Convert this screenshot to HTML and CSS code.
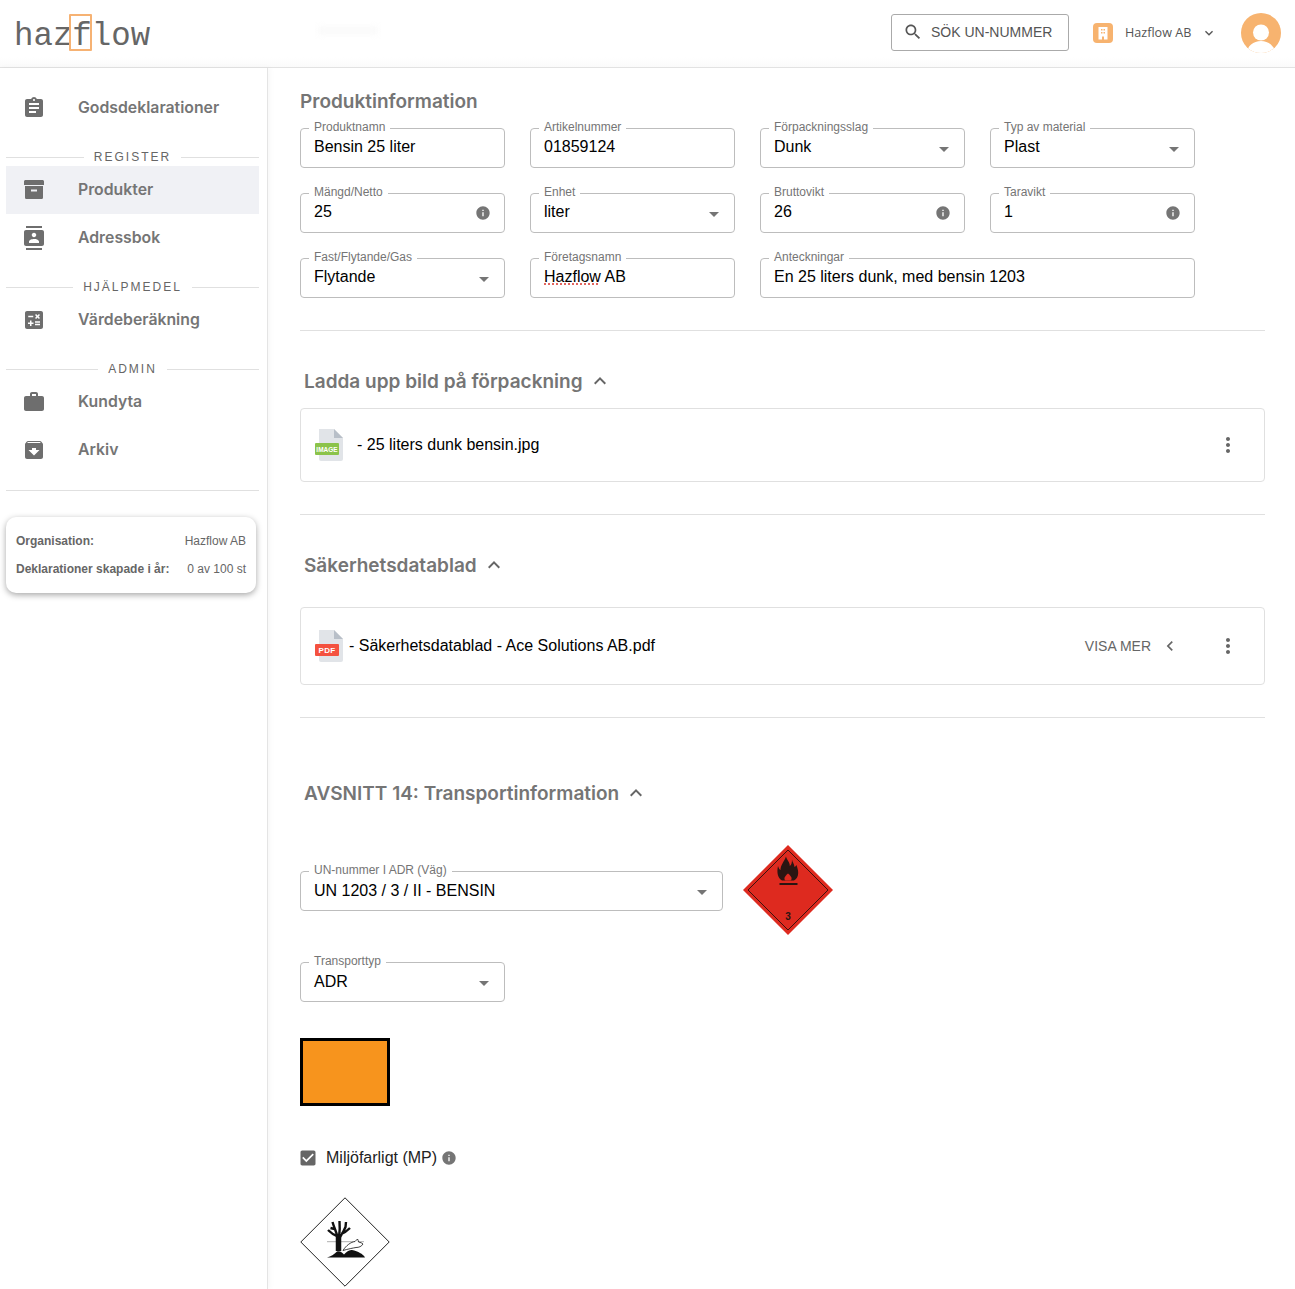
FILE: index.html
```html
<!DOCTYPE html>
<html lang="sv">
<head>
<meta charset="utf-8">
<title>Hazflow – Produktinformation</title>
<link rel="stylesheet" href="styles.css">
</head>
<body>
<svg class="sprite" aria-hidden="true">
  <symbol id="i-assign" viewBox="0 0 24 24"><path d="M19 3h-4.18C14.4 1.84 13.3 1 12 1c-1.3 0-2.4.84-2.82 2H5c-1.1 0-2 .9-2 2v14c0 1.1.9 2 2 2h14c1.1 0 2-.9 2-2V5c0-1.1-.9-2-2-2zm-7 0c.55 0 1 .45 1 1s-.45 1-1 1-1-.45-1-1 .45-1 1-1zm2 14H7v-2h7v2zm3-4H7v-2h10v2zm0-4H7V7h10v2z"/></symbol>
  <symbol id="i-box" viewBox="0 0 24 24"><path fill-rule="evenodd" d="M2 3.500C2 2.700 2.700 2 3.500 2h17c.8 0 1.500.7 1.500 1.500V7H2zM3 8h18v11.500c0 1-.8 1.500-1.500 1.500h-15C3.800 21 3 20.500 3 19.500zm6 3.500V13.500h6v-2z"/></symbol>
  <symbol id="i-contacts" viewBox="0 0 24 24"><path d="M20 0H4v2h16V0zM4 24h16v-2H4v2zM20 4H4c-1.100 0-2 .9-2 2v12c0 1.100.9 2 2 2h16c1.100 0 2-.9 2-2V6c0-1.100-.9-2-2-2zm-8 2.750c1.240 0 2.250 1.010 2.250 2.250s-1.010 2.250-2.250 2.250S9.750 10.240 9.750 9 10.760 6.750 12 6.750zM17 17H7v-1.500c0-1.670 3.330-2.500 5-2.500s5 .83 5 2.500V17z"/></symbol>
  <symbol id="i-calc" viewBox="0 0 24 24"><path d="M19 3H5c-1.100 0-2 .9-2 2v14c0 1.100.9 2 2 2h14c1.100 0 2-.9 2-2V5c0-1.100-.9-2-2-2zm-5.970 4.060L14.090 6l1.410 1.410L16.910 6l1.060 1.060-1.410 1.410 1.410 1.410-1.060 1.060-1.410-1.400-1.410 1.410-1.060-1.060 1.410-1.410-1.410-1.420zm-6.780.66h5v1.500h-5v-1.500zM11.500 16h-2v2H8v-2H6v-1.500h2v-2h1.500v2h2V16zm6.500 1.250h-5v-1.500h5v1.500zm0-2.500h-5v-1.500h5v1.500z"/></symbol>
  <symbol id="i-work" viewBox="0 0 24 24"><path d="M20 6h-4V4c0-1.110-.89-2-2-2h-4c-1.110 0-2 .89-2 2v2H4c-1.110 0-1.990.89-1.990 2L2 19c0 1.110.89 2 2 2h16c1.110 0 2-.89 2-2V8c0-1.110-.89-2-2-2zm-6 0h-4V4h4v2z"/></symbol>
  <symbol id="i-archive" viewBox="0 0 24 24"><path d="M20.540 5.230l-1.390-1.680C18.880 3.210 18.470 3 18 3H6c-.47 0-.88.21-1.160.55L3.460 5.230C3.170 5.570 3 6.020 3 6.500V19c0 1.100.9 2 2 2h14c1.100 0 2-.9 2-2V6.500c0-.48-.17-.93-.46-1.270zM12 17.500L6.500 12H10v-2h4v2h3.500L12 17.500zM5.120 5l.81-1h12l.94 1H5.120z"/></symbol>
  <symbol id="i-search" viewBox="0 0 24 24"><path d="M15.500 14h-.79l-.28-.27C15.410 12.590 16 11.110 16 9.500 16 5.910 13.090 3 9.500 3S3 5.910 3 9.500 5.910 16 9.500 16c1.610 0 3.090-.59 4.230-1.570l.27.28v.79l5 4.990L20.490 19l-4.990-5zm-6 0C7.010 14 5 11.990 5 9.500S7.010 5 9.500 5 14 7.010 14 9.500 11.990 14 9.500 14z"/></symbol>
  <symbol id="i-info" viewBox="0 0 24 24"><path d="M12 2C6.480 2 2 6.480 2 12s4.480 10 10 10 10-4.480 10-10S17.520 2 12 2zm1 15h-2v-6h2v6zm0-8h-2V7h2v2z"/></symbol>
  <symbol id="i-more" viewBox="0 0 24 24"><path d="M12 8c1.100 0 2-.9 2-2s-.9-2-2-2-2 .9-2 2 .9 2 2 2zm0 2c-1.100 0-2 .9-2 2s.9 2 2 2 2-.9 2-2-.9-2-2-2zm0 6c-1.100 0-2 .9-2 2s.9 2 2 2 2-.9 2-2-.9-2-2-2z"/></symbol>
  <symbol id="i-up" viewBox="0 0 24 24"><path d="M12 8l-6 6 1.410 1.410L12 10.830l4.590 4.580L18 14z"/></symbol>
  <symbol id="i-down" viewBox="0 0 24 24"><path d="M16.590 8.590L12 13.170 7.410 8.590 6 10l6 6 6-6z"/></symbol>
  <symbol id="i-left" viewBox="0 0 24 24"><path d="M15.410 7.410L14 6l-6 6 6 6 1.410-1.410L10.830 12z"/></symbol>
  <symbol id="i-drop" viewBox="0 0 24 24"><path d="M7 10l5 5 5-5z"/></symbol>
  <symbol id="i-check" viewBox="0 0 24 24"><path d="M19 3H5c-1.110 0-2 .9-2 2v14c0 1.100.89 2 2 2h14c1.110 0 2-.9 2-2V5c0-1.100-.89-2-2-2zm-9 14l-5-5 1.410-1.410L10 14.170l7.590-7.590L19 8l-9 9z"/></symbol>
</svg>

<header class="topbar">
  <div class="logo">haz<span class="logo-f">f</span>low</div>
  <div class="ghost" aria-hidden="true"></div>
  <button class="search-btn" type="button"><svg class="icon-20"><use href="#i-search"/></svg><span>SÖK UN-NUMMER</span></button>
  <div class="org">
    <svg class="org-icon" viewBox="0 0 20 20"><rect width="20" height="20" rx="4" fill="#f7b36f"/><path fill="#fff" d="M5.500 4h9v12.500H11v-3H9v3H5.500z"/><path fill="#f7b36f" d="M8 6h1.500v1.500H8zM10.500 6H12v1.500h-1.500zM8 9h1.500v1.500H8zM10.500 9H12v1.500h-1.500z"/></svg>
    <span class="org-name">Hazflow AB</span>
    <svg class="icon-16"><use href="#i-down"/></svg>
  </div>
  <svg class="avatar" viewBox="0 0 40 40"><defs><clipPath id="av"><circle cx="20" cy="20" r="20"/></clipPath></defs><g clip-path="url(#av)"><rect width="40" height="40" fill="#f7b36f"/><circle cx="20" cy="19.500" r="8" fill="#fff"/><ellipse cx="20" cy="40" rx="14" ry="12" fill="#fff"/></g></svg>
</header>

<div class="shell">
  <aside class="sidebar">
    <nav>
      <a class="nav-item"><svg class="icon-24"><use href="#i-assign"/></svg>Godsdeklarationer</a>
      <div class="nav-label"><span>REGISTER</span></div>
      <a class="nav-item active"><svg class="icon-24"><use href="#i-box"/></svg>Produkter</a>
      <a class="nav-item"><svg class="icon-24"><use href="#i-contacts"/></svg>Adressbok</a>
      <div class="nav-label"><span>HJÄLPMEDEL</span></div>
      <a class="nav-item"><svg class="icon-24"><use href="#i-calc"/></svg>Värdeberäkning</a>
      <div class="nav-label"><span>ADMIN</span></div>
      <a class="nav-item"><svg class="icon-24"><use href="#i-work"/></svg>Kundyta</a>
      <a class="nav-item"><svg class="icon-24"><use href="#i-archive"/></svg>Arkiv</a>
    </nav>
    <hr class="side-rule">
    <div class="org-card">
      <div class="org-row"><strong>Organisation:</strong><span>Hazflow AB</span></div>
      <div class="org-row"><strong>Deklarationer skapade i år:</strong><span>0 av 100 st</span></div>
    </div>
  </aside>

  <main class="content">
    <h2 class="page-title">Produktinformation</h2>
    <div class="form-grid">
      <div class="field"><label>Produktnamn</label><span class="value">Bensin 25 liter</span></div>
      <div class="field"><label>Artikelnummer</label><span class="value">01859124</span></div>
      <div class="field"><label>Förpackningsslag</label><span class="value">Dunk</span><svg class="drop"><use href="#i-drop"/></svg></div>
      <div class="field"><label>Typ av material</label><span class="value">Plast</span><svg class="drop"><use href="#i-drop"/></svg></div>
      <div class="field"><label>Mängd/Netto</label><span class="value">25</span><svg class="info"><use href="#i-info"/></svg></div>
      <div class="field"><label>Enhet</label><span class="value">liter</span><svg class="drop"><use href="#i-drop"/></svg></div>
      <div class="field"><label>Bruttovikt</label><span class="value">26</span><svg class="info"><use href="#i-info"/></svg></div>
      <div class="field"><label>Taravikt</label><span class="value">1</span><svg class="info"><use href="#i-info"/></svg></div>
      <div class="field"><label>Fast/Flytande/Gas</label><span class="value">Flytande</span><svg class="drop"><use href="#i-drop"/></svg></div>
      <div class="field"><label>Företagsnamn</label><span class="value"><span class="spell">Hazflow</span> AB</span></div>
      <div class="field span-2"><label>Anteckningar</label><span class="value">En 25 liters dunk, med bensin 1203</span></div>
    </div>
    <hr class="rule">

    <h3 class="section-head">Ladda upp bild på förpackning<svg class="icon-24"><use href="#i-up"/></svg></h3>
    <div class="file-card image-card">
      <svg class="file-icon" viewBox="0 0 30 34"><path fill="#e1e4e8" d="M4 1h15l9 9v21a2 2 0 0 1-2 2H6a2 2 0 0 1-2-2z"/><path fill="#b8bfc8" d="M19 1l9 9h-9z"/><rect y="15" width="24" height="12" rx="1" fill="#8bc34a"/><text x="12" y="23.500" class="file-tag small">IMAGE</text></svg>
      <span class="file-name">- 25 liters dunk bensin.jpg</span>
      <svg class="icon-24 more"><use href="#i-more"/></svg>
    </div>
    <hr class="rule">

    <h3 class="section-head">Säkerhetsdatablad<svg class="icon-24"><use href="#i-up"/></svg></h3>
    <div class="file-card pdf-card">
      <svg class="file-icon" viewBox="0 0 30 34"><path fill="#e1e4e8" d="M4 1h15l9 9v21a2 2 0 0 1-2 2H6a2 2 0 0 1-2-2z"/><path fill="#b8bfc8" d="M19 1l9 9h-9z"/><rect y="15" width="24" height="12" rx="1" fill="#f4513f"/><text x="12" y="24" class="file-tag">PDF</text></svg>
      <span class="file-name">- Säkerhetsdatablad - Ace Solutions AB.pdf</span>
      <span class="visa-mer">VISA MER</span>
      <svg class="icon-20 visa-chev"><use href="#i-left"/></svg>
      <svg class="icon-24 more"><use href="#i-more"/></svg>
    </div>
    <hr class="rule">

    <h3 class="section-head transport-head">AVSNITT 14: Transportinformation<svg class="icon-24"><use href="#i-up"/></svg></h3>
    <div class="un-row">
      <div class="field un-field"><label>UN-nummer I ADR (Väg)</label><span class="value">UN 1203 / 3 / II - BENSIN</span><svg class="drop"><use href="#i-drop"/></svg></div>
      <svg class="placard" viewBox="0 0 90 90">
        <polygon points="45,0 90,45 45,90 0,45" fill="#de2a1f"/>
        <polygon points="45,5 85,45 45,85 5,45" fill="none" stroke="#3a120e" stroke-width="1"/>
        <path fill="#2b1512" d="M39 35.500C35 33 33.500 28 35 21c.8 2.500 1.500 3.500 2.500 4C37.500 20 41 17 43 11.500c1 4 4 5.500 3.800 9.500 1.500-1 2.200-3 2.200-6.500 .5 3 2.200 4 2.500 7.500 .8-.5 1.500-1 2-2 1 3 1.800 5.500 1.700 8-.2 4-1.700 6-4.200 7.500z"/>
        <path fill="#de2a1f" d="M42.500 35.500c-2-1.500-1.200-4 2.500-7 3.800 3 4.500 5.500 2.500 7z"/>
        <rect x="36.500" y="38" width="18" height="2" fill="#2b1512"/>
        <text x="45" y="75" class="placard-num">3</text>
      </svg>
    </div>
    <div class="field transport-field"><label>Transporttyp</label><span class="value">ADR</span><svg class="drop"><use href="#i-drop"/></svg></div>
    <div class="orange-plate"></div>
    <div class="check-row">
      <svg class="check-box"><use href="#i-check"/></svg>
      <span>Miljöfarligt (MP)</span>
      <svg class="check-info"><use href="#i-info"/></svg>
    </div>
    <svg class="placard env" viewBox="0 0 90 90">
      <polygon points="45,0.800 89.200,45 45,89.200 0.800,45" fill="#fff" stroke="#222" stroke-width="1"/>
      <path fill="none" stroke="#999" stroke-width="0.800" d="M27 44.700h37"/>
      <path fill="none" stroke="#111" stroke-width="5.500" d="M38.500 54V37"/>
      <path fill="none" stroke="#111" stroke-width="2.400" d="M37.500 40c-1-5-3-8-5-15M37 39c-3-1-6-3-9-6M34.500 32l-4-1M39 40c1-6 1-10 .5-16M40 40c2-3 4-6 5.500-10l.5-5M41 37c3-1 6-3 9-6"/>
      <path fill="#111" d="M27 60.500c4-1 7-3 10-6 3-1 5 1 7 3 2-2 5-5 8-4.500 3 .5 6 1.500 8 3 2 1 4 2.500 5 4.500z"/>
      <path fill="#fff" stroke="#111" stroke-width="0.800" d="M43 53.500c3-5 8-8.500 12-9l2.500-2.500c.5 1 1 2 1 3 2 .3 3.500 1 4.500 2-1.500 2.500-4 3.500-7 3.500-3 .5-8 1.500-13 3z"/>
    </svg>
  </main>
</div>
</body>
</html>
```

FILE: styles.css
```css
* { box-sizing: border-box; }
html, body { margin: 0; padding: 0; height: 1289px; overflow: hidden; background: #fff; }
body { font-family: "Liberation Sans", Arial, sans-serif; color: #000; display: flex; flex-direction: column; }
.sprite { width: 0; height: 0; position: absolute; }
svg { display: block; flex: none; fill: currentColor; }
.icon-24 { width: 24px; height: 24px; }
.icon-20 { width: 20px; height: 20px; }
.icon-16 { width: 16px; height: 16px; }

/* top bar */
.topbar { height: 68px; flex: none; display: flex; align-items: center; padding: 0 14px 0 14px; border-bottom: 1px solid #e2e2e2; background: linear-gradient(#fff 85%, #fafafa); }
.logo { font-family: "Liberation Mono", monospace; font-size: 32.400px; color: #666; line-height: 36px; margin-top: 6px; }
.logo-f { position: relative; }
.logo-f::after { content: ""; position: absolute; left: -3px; right: 0; top: -4px; bottom: 4px; border: 2px solid #f6b273; border-radius: 1px; }
.ghost { width: 60px; height: 7px; margin-left: 168px; margin-top: -6px; background: #f9f9f9; filter: blur(3px); }
.search-btn { margin-left: auto; width: 178px; height: 37px; display: flex; align-items: center; gap: 8px; padding: 0 0 0 11px; border: 1px solid #aaa; border-radius: 3px; background: #fff; color: #555; font: 14px "Liberation Sans", Arial, sans-serif; margin-top: -3px; }
.org { display: flex; align-items: center; margin-left: 24px; width: 148px; color: #555; margin-top: -2px; }
.org-icon { width: 20px; height: 20px; }
.org-name { font-family: "Open Sans", sans-serif; font-size: 12.600px; margin-left: 12px; width: 76px; white-space: nowrap; }
.avatar { width: 40px; height: 40px; margin-top: -2px; }

/* layout */
.shell { flex: 1; display: flex; min-height: 0; }
.sidebar { width: 268px; flex: none; padding: 16px 8px 0 6px; border-right: 1px solid #e4e4e4; box-shadow: 2px 0 6px rgba(0,0,0,.035); }
.nav-item { display: flex; align-items: center; gap: 32px; height: 48px; padding: 0 0 2px 16px; font-family: Inter, sans-serif; font-weight: 600; font-size: 15.800px; color: #757575; }
.nav-item svg { margin-top: 2px; color: #6e6e6e; }
.nav-item.active { background: #f0f1f5; }
.nav-label { height: 34px; display: flex; align-items: center; gap: 10px; padding-top: 17px; font-size: 12px; letter-spacing: 2px; color: #666; }
.nav-label::before, .nav-label::after { content: ""; flex: 1; height: 1px; background: #e0e0e0; }
.nav-label span { margin-top: -1px; }
.side-rule { margin: 16px 0 0; border: 0; height: 1px; background: #e0e0e0; }
.org-card { margin: 26px 3px 0 0; height: 76px; padding: 10px; border-radius: 10px; background: #fff; box-shadow: 0 2px 6px rgba(0,0,0,.35); font-size: 12px; color: #666; }
.org-row { height: 28px; display: flex; align-items: center; justify-content: space-between; }
.org-row strong { font-weight: 700; }

/* content */
.content { flex: 1; min-width: 0; padding: 20px 30px 0 32px; }
.page-title { margin: 0 0 12px; height: 28px; line-height: 28px; font-family: Inter, sans-serif; font-size: 19px; font-weight: 600; color: #757575; }
.form-grid { display: grid; grid-template-columns: repeat(4, 205px); gap: 25px; }
.span-2 { grid-column: span 2; }
.field { position: relative; height: 40px; display: flex; align-items: center; padding: 0 13px 2px; border: 1px solid #bdbdbd; border-radius: 4px; background: #fff; }
.field label { position: absolute; left: 8px; top: -9px; padding: 0 5px; background: #fff; font-size: 12px; line-height: 14px; color: #757575; white-space: nowrap; }
.value { font-size: 16px; line-height: 20px; white-space: nowrap; }
.spell { text-decoration: underline dotted #d9332b; text-underline-offset: 2px; }
.drop { position: absolute; right: 8px; top: 8px; width: 24px; height: 24px; color: #757575; }
.info { position: absolute; right: 13px; top: 11px; width: 16px; height: 16px; color: #757575; }
.rule { margin: 32px 0 0; border: 0; height: 1px; background: #e0e0e0; }
.section-head { margin: 36px 0 13px; height: 28px; padding-left: 4px; display: flex; align-items: center; gap: 5px; font-family: Inter, sans-serif; font-size: 19px; font-weight: 600; color: #757575; }
.section-head svg { color: #666; }
.file-card { display: flex; align-items: center; border: 1px solid #e0e0e0; border-radius: 4px; padding-left: 14px; padding-right: 24px; }
.image-card { height: 74px; gap: 12px; }
.pdf-card { height: 78px; gap: 4px; }
.section-head:has(+ .pdf-card) { margin-bottom: 28px; }
.file-icon { width: 30px; height: 34px; }
.file-tag { font: 700 8px "Liberation Sans", Arial, sans-serif; fill: #fff; text-anchor: middle; letter-spacing: .4px; }
.file-tag.small { font-size: 6.500px; letter-spacing: 0; }
.file-name { font-size: 16px; flex: 1; white-space: nowrap; }
.more { color: #666; }
.visa-mer { font-size: 14px; color: #666; margin-right: -1px; }
.visa-chev { color: #666; margin: 0 32px 0 6px; }
.transport-head { margin-top: 61px; margin-bottom: 38px; }
.un-row { display: flex; align-items: center; gap: 20px; }
.un-field { width: 423px; margin-top: 2px; padding-bottom: 0; }
.placard { width: 90px; height: 90px; }
.placard-num { font: 700 10px "Liberation Sans", Arial, sans-serif; fill: #2b1512; text-anchor: middle; }
.transport-field { width: 205px; margin-top: 27px; padding-bottom: 0; }
.orange-plate { width: 90px; height: 68px; margin-top: 36px; background: #f7941d; border: 3px solid #000; }
.check-row { margin-top: 40px; height: 24px; display: flex; align-items: center; font-size: 16px; color: #222; }
.check-box { width: 20px; height: 20px; margin-left: -2px; margin-right: 8px; color: #666; }
.check-info { width: 16px; height: 16px; margin-left: 4px; color: #757575; }
.env { margin-top: 27px; }
```
